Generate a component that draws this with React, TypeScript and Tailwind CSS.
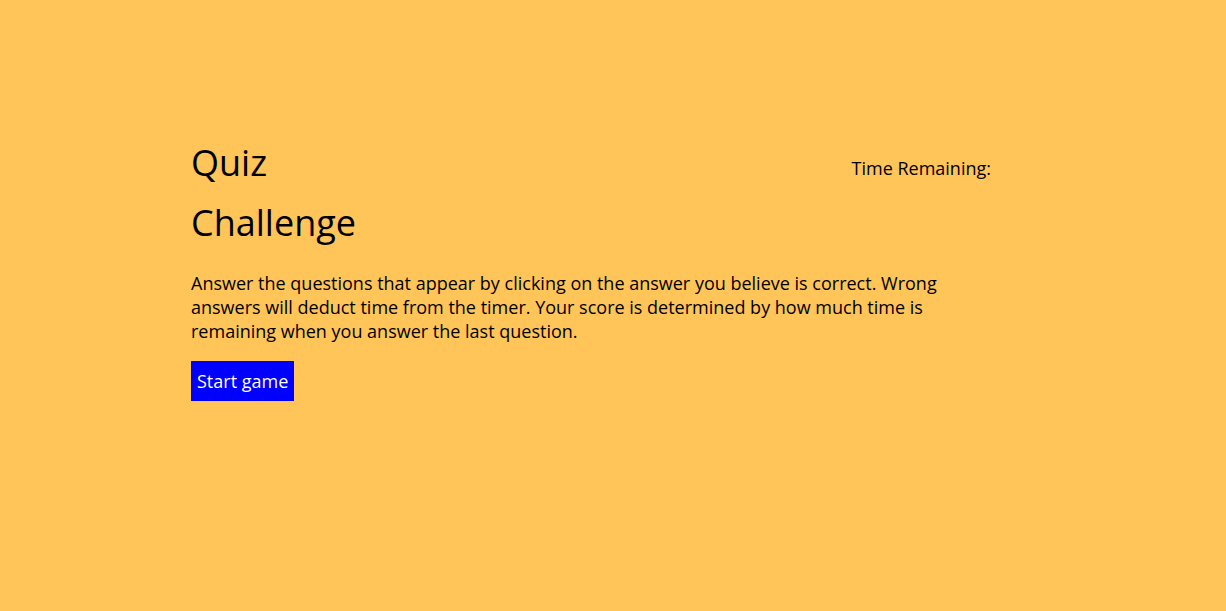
export default function App() {
  return (
    <div className="min-h-[611px] w-full bg-[#ffc559] text-black" style={{ fontFamily: '"Open Sans", sans-serif' }}>
      <div className="ml-[191px] w-[800px] pt-[133px]">
        <header className="flex items-start justify-between">
          <h1 className="w-[200px] text-[36px] leading-[60px] font-normal">Quiz Challenge</h1>
          <p className="mt-[23px] text-[18px] leading-[24px]">Time Remaining:</p>
        </header>
        <p className="mt-[18px] text-[18px] leading-[24px]">
          Answer the questions that appear by clicking on the answer you believe is correct. Wrong answers will deduct time from the timer. Your score is determined by how much time is remaining when you answer the last question.
        </p>
        <button className="mt-[18px] h-[40px] bg-[#0000ff] px-[6px] text-[18px] text-white">Start game</button>
      </div>
    </div>
  );
}
